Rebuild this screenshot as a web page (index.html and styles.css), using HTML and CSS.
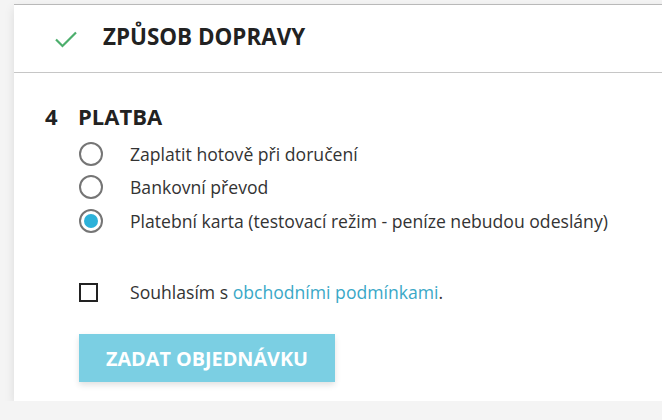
FILE: index.html
```
<!DOCTYPE html>
<html lang="cs">
<head>
<meta charset="utf-8">
<link rel="stylesheet" href="styles.css">
</head>
<body>
<div class="card">
  <div class="step-done">
    <svg class="check" width="24" height="20" viewBox="0 0 24 20"><path d="M2 9.5 L8.5 16 L22 2.5" fill="none" stroke="#4cae6c" stroke-width="2.2"/></svg>
    <h2 class="step-title">ZPŮSOB DOPRAVY</h2>
  </div>
  <div class="step-active">
    <h2 class="step-heading"><span class="step-num">4</span>PLATBA</h2>
    <div class="options">
      <label class="option"><span class="radio"></span><span>Zaplatit hotově při doručení</span></label>
      <label class="option"><span class="radio"></span><span>Bankovní převod</span></label>
      <label class="option"><span class="radio selected"></span><span>Platební karta (testovací režim - peníze nebudou odeslány)</span></label>
    </div>
    <label class="option agree"><span class="checkbox"></span><span>Souhlasím s <a class="link" href="#">obchodními podmínkami</a>.</span></label>
    <button class="submit">ZADAT OBJEDNÁVKU</button>
  </div>
</div>
</body>
</html>
```
FILE: styles.css
```
html, body { margin: 0; padding: 0; }
body {
  background: #f4f4f4;
  font-family: "Open Sans", "Liberation Sans", sans-serif;
  color: #333;
  overflow: hidden;
}
.card {
  margin: 4px -30px 0 14px;
  background: #fff;
  border-top: 1px solid #b9b9b9;
  box-shadow: 0 4px 10px rgba(0,0,0,0.10);
}
.step-done {
  height: 68px;
  display: flex;
  align-items: center;
  padding-left: 40px;
  border-bottom: 1px solid #c6c6c6;
  box-sizing: border-box;
}
.check { margin-right: 25px; margin-top: 3px; }
.step-title {
  margin: -4px 0 0 0;
  font-size: 22.4px;
  font-weight: 700;
  color: #222;
  line-height: 30px;
}
.step-active {
  padding: 28px 0 19px 31px;
}
.step-heading {
  margin: 0;
  font-size: 22px;
  font-weight: 700;
  color: #222;
  line-height: 30px;
}
.step-num { display: inline-block; width: 33px; }
.options { margin-top: 6px; }
.option {
  display: flex;
  align-items: center;
  height: 33.5px;
  padding-left: 34px;
  font-size: 17.6px;
  color: #333;
}
.radio {
  width: 24px;
  height: 24px;
  box-sizing: border-box;
  border: 2px solid #757575;
  border-radius: 50%;
  margin-right: 27px;
  flex: none;
  position: relative;
}
.radio.selected::after {
  content: "";
  position: absolute;
  left: 3px; top: 3px;
  width: 14px; height: 14px;
  border-radius: 50%;
  background: #2cb1d9;
}
.agree { margin-top: 38px; }
.checkbox {
  width: 19px;
  height: 19px;
  box-sizing: border-box;
  border: 2px solid #222;
  margin-left: 0;
  margin-right: 32px;
  flex: none;
}
.link { color: #3aa8c7; text-decoration: none; }
.submit {
  display: block;
  margin: 25px 0 0 34px;
  width: 256px;
  height: 48px;
  border: 0;
  background: #7bcfe3;
  color: #fff;
  font-family: "Open Sans", "Liberation Sans", sans-serif;
  font-weight: 700;
  font-size: 19.8px;
  letter-spacing: 0;
  box-shadow: 0 3px 6px rgba(0,0,0,0.12);
  padding: 0;
}
```
